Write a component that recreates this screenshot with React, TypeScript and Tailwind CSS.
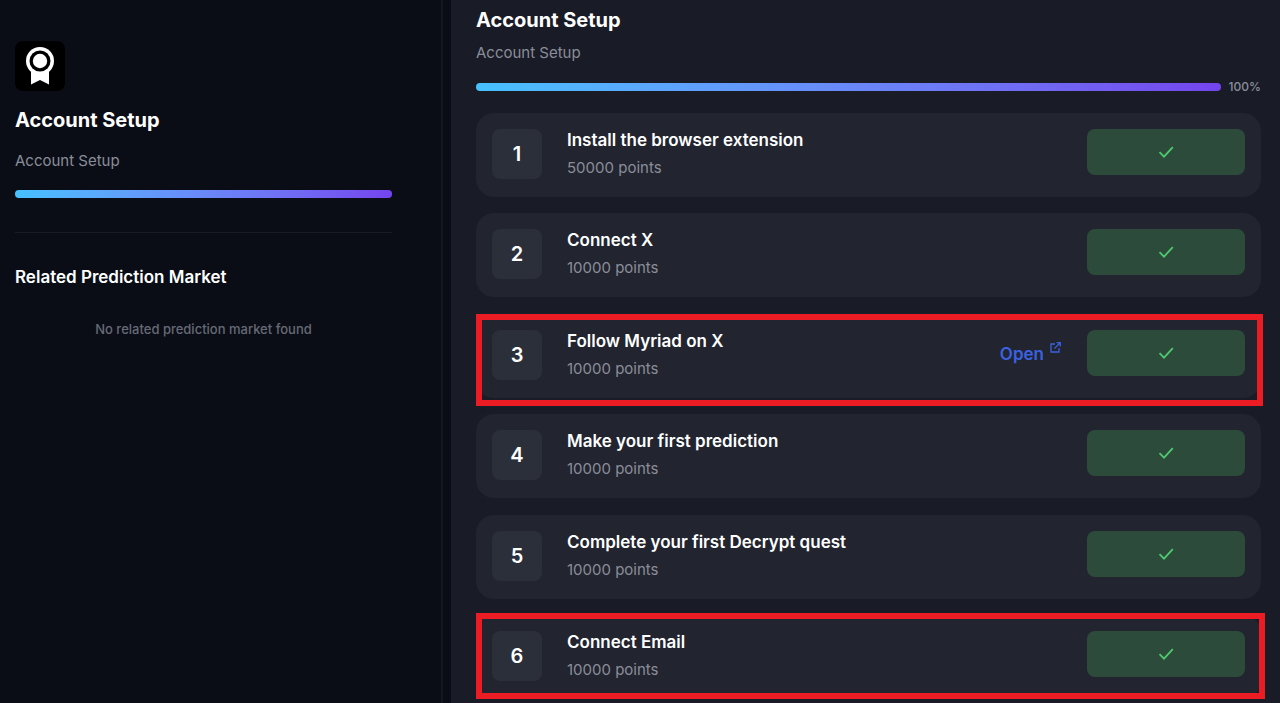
import React from 'react';

interface Task {
  id: number;
  title: string;
  points: number;
  link?: string;
  highlight?: string;
}

const tasks: Task[] = [
  { id: 1, title: 'Install the browser extension', points: 50000 },
  { id: 2, title: 'Connect X', points: 10000 },
  {
    id: 3,
    title: 'Follow Myriad on X',
    points: 10000,
    link: '#follow',
    highlight: 'top-0 left-0 -right-0.5 -bottom-2',
  },
  { id: 4, title: 'Make your first prediction', points: 10000 },
  { id: 5, title: 'Complete your first Decrypt quest', points: 10000 },
  {
    id: 6,
    title: 'Connect Email',
    points: 10000,
    highlight: '-top-0.5 left-0 -right-1 bottom-0',
  },
];

function AwardIcon() {
  return (
    <svg viewBox="0 0 50 50" className="size-full" aria-hidden="true">
      <path d="M16 26h18v17.5l-9-4.5-9 4.5z" fill="#fff" />
      <circle cx="25" cy="20" r="14" fill="#fff" />
      <circle cx="25" cy="20" r="10.5" fill="#000" />
      <circle cx="25" cy="20" r="7.2" fill="#fff" />
    </svg>
  );
}

function CheckIcon() {
  return (
    <svg viewBox="0 0 16 12" className="w-4 h-3" fill="none" stroke="#4fc96f" strokeWidth="1.8" aria-hidden="true">
      <path d="M1.5 6.2l4.5 4.4L14.8 1.2" />
    </svg>
  );
}

function ExternalIcon() {
  return (
    <svg viewBox="0 0 11 11" className="size-[11px]" fill="none" stroke="#3a62e0" strokeWidth="1.3" aria-hidden="true">
      <path d="M5 2H1v8h8V6M6.6.7h3.7v3.7M10.2.8L4.4 6.6" />
    </svg>
  );
}

function ProgressBar({ value }: { value: number }) {
  return (
    <div
      role="progressbar"
      aria-label="Account Setup"
      aria-valuenow={value}
      className="h-2 flex-1 rounded-full bg-[#22242f]"
    >
      <div
        className="h-full rounded-full bg-linear-to-r from-[#45c1ff] to-[#7444ee]"
        style={{ width: `${value}%` }}
      />
    </div>
  );
}

function TaskCard({ task }: { task: Task }) {
  return (
    <li className="relative flex items-start rounded-[18px] bg-[#22242f] px-4 pt-4 pb-[18px]">
      <span className="flex size-[50px] shrink-0 items-center justify-center rounded-lg bg-[#2b2f3a] text-xl font-semibold">
        {task.id}
      </span>
      <div className="ml-[25px] flex-1">
        <h2 className="text-[17px] leading-[22px] font-semibold">{task.title}</h2>
        <p className="mt-1.5 text-[15px] leading-[22px] text-[#8a8e99]">{task.points} points</p>
      </div>
      {task.link && (
        <a href={task.link} className="mr-[26px] mt-3 flex items-start gap-1.5 text-[17px] leading-6 font-semibold text-[#3a62e0]">
          Open
          <ExternalIcon />
        </a>
      )}
      <button
        type="button"
        aria-label={`${task.title} completed`}
        className="flex h-[46px] w-[158px] shrink-0 items-center justify-center rounded-lg bg-[#2c4b3a]"
      >
        <CheckIcon />
      </button>
      {task.highlight && (
        <div className={`pointer-events-none absolute border-[6px] border-[#ec1c24] ${task.highlight}`} />
      )}
    </li>
  );
}

export default function App() {
  return (
    <div className="flex min-h-screen bg-[#0a0d16] font-['Inter',sans-serif] text-white">
      {/* Quest summary */}
      <aside className="mr-2 w-[443px] shrink-0 border-r-2 border-[#141721] pt-[41px] pr-[49px] pl-[15px]">
        <div className="size-[50px] overflow-hidden rounded-lg bg-black">
          <AwardIcon />
        </div>
        <h1 className="mt-[15px] text-xl leading-7 font-bold">Account Setup</h1>
        <p className="mt-4 text-[15px] leading-[22px] text-[#8a8e99]">Account Setup</p>
        <div className="mt-[18px] flex">
          <ProgressBar value={100} />
        </div>
        <hr className="mt-[34px] border-[#191c27]" />
        <h2 className="mt-8 text-[17px] leading-6 font-semibold">Related Prediction Market</h2>
        <p className="mt-[30px] text-center text-[13px] leading-5 font-medium text-[#666a75]">
          No related prediction market found
        </p>
      </aside>

      {/* Task list, spread down to the foot of the window */}
      <main className="flex flex-1 flex-col bg-[#191b26] pt-1.5 pr-[19px] pb-1 pl-[25px]">
        <h1 className="text-xl leading-7 font-bold">Account Setup</h1>
        <p className="mt-2 text-[15px] leading-[22px] text-[#8a8e99]">Account Setup</p>
        <div className="mt-[13px] flex items-center gap-2">
          <ProgressBar value={100} />
          <span className="text-xs leading-5 font-medium text-[#8a8e99]">100%</span>
        </div>
        <ul className="mt-4 flex flex-1 flex-col justify-between gap-4">
          {tasks.map((task) => (
            <TaskCard key={task.id} task={task} />
          ))}
        </ul>
      </main>
    </div>
  );
}
